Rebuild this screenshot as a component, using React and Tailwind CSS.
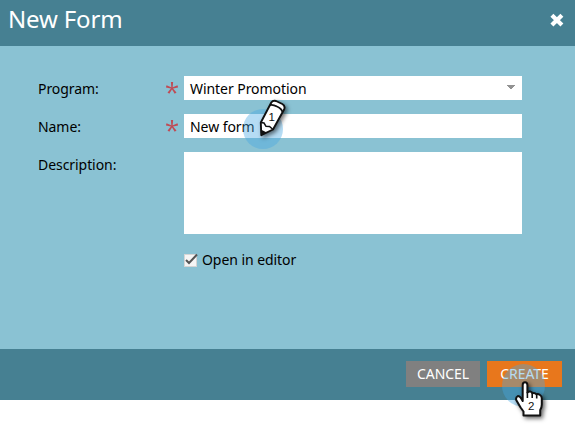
import React from "react";

function Required() {
  return (
    <svg className="mr-[6px] h-[12px] w-[12px] shrink-0" viewBox="0 0 12 12" fill="#c04a54">
      {[0, 72, 144, 216, 288].map((a) => (
        <path key={a} d="M4.900 0.100H7.100L6.600 6.300H5.400Z" transform={`rotate(${a} 6 6.2)`} />
      ))}
    </svg>
  );
}

function Row({ label, required, className = "", children }) {
  return (
    <div className={`flex ${className}`}>
      <div className="flex h-6 w-[146px] items-center justify-between">
        <label className="relative top-px">{label}</label>
        {required && <Required />}
      </div>
      {children}
    </div>
  );
}

function PencilMarker() {
  return (
    <svg className="absolute left-[235px] top-[92px] h-[62px] w-[60px]" viewBox="235 92 60 62">
      <circle cx="263" cy="129" r="20" fill="#45a8e3" fillOpacity="0.4" />
      <g className="drop-shadow-[2px_2px_2px_rgba(0,0,0,0.55)]">
        <path
          d="M271.300 102.500Q273 100 276 101L282.300 104Q285.500 105.800 284.200 109.200L273 129.500L261.300 135.200L260.800 122.500Z"
          fill="#fff"
          stroke="#111"
          strokeWidth="1.9"
          strokeLinejoin="round"
        />
        <path d="M270 105Q273 104.300 277 106.500Q281.500 108.500 282.500 112" fill="none" stroke="#111" strokeWidth="1.8" />
        <path d="M260.800 122.500L264 123L266 126.300L269.500 126.500L273 129.500" fill="none" stroke="#111" strokeWidth="1.5" />
        <path d="M260.800 129.500L266.800 132.500L261 135.700Z" fill="#111" />
      </g>
      <text x="268.400" y="121" fontSize="11.500" fontFamily="Liberation Sans, sans-serif" fill="#111">1</text>
    </svg>
  );
}

function HandMarker() {
  return (
    <svg className="absolute left-[498px] top-[360px] h-[65px] w-[60px]" viewBox="498 360 60 65">
      <circle cx="523.500" cy="385.500" r="21.500" fill="#45a8e3" fillOpacity="0.4" />
      <g className="drop-shadow-[2px_2px_2px_rgba(0,0,0,0.6)]">
        <path
          d="M522.700 401V385Q522.700 382.300 525 382.300T527.400 385V392.500Q528.500 391.400 530.500 391.600Q532 392 532.500 393.300Q534.500 392.300 536.400 394.300Q538 393.700 540 395Q541.800 396.200 541.800 398.500V404.500Q541.800 407.500 540.200 410V415.600H523.500V411.500L520.600 407.500L516.200 400Q515.600 397 517.800 396.100Q520 396 522.700 401Z"
          fill="#fff"
          stroke="#111"
          strokeWidth="2"
          strokeLinejoin="round"
        />
        <path d="M527.400 392V398M532.200 393V398M536.700 394.500V398.500" stroke="#111" strokeWidth="1.6" />
      </g>
      <text x="528" y="410" fontSize="11.500" fontFamily="Liberation Sans, sans-serif" fill="#111">2</text>
    </svg>
  );
}

export default function App() {
  return (
    <div className="relative h-[425px] w-[575px] overflow-hidden bg-white font-['Noto_Sans',sans-serif] text-[14px] leading-5 tracking-[-0.06px] text-black">
      <header className="flex h-[46px] items-start justify-between bg-[#468092] pl-2 pr-[11px] text-white">
        <h1 className="mt-[4px] text-[24px] leading-[30px] tracking-[-0.15px]">New Form</h1>
        <svg className="mt-[13px] h-[14px] w-[14px]" viewBox="0 0 14 14">
          <path d="M1.900 2.200L11.900 12M11.900 2.200L1.900 12" stroke="#fff" strokeWidth="4.200" />
        </svg>
      </header>
      <main className="h-[303px] bg-[#8ac2d3] pl-[38px] pt-[30px]">
        <Row label="Program:" required className="mb-[14px]">
          <div className="flex h-6 w-[338px] items-center justify-between bg-white pl-[6px] pr-[7px]">
            <span className="relative top-px">Winter Promotion</span>
            <svg className="mb-[2px] h-[4px] w-[8px]" viewBox="0 0 8 4" shapeRendering="crispEdges">
              <path d="M0 0H8V1H7V2H6V3H5V4H3V3H2V2H1V1H0Z" fill="#929292" />
            </svg>
          </div>
        </Row>
        <Row label="Name:" required className="mb-[14px]">
          <div className="flex h-6 w-[338px] items-center bg-white pl-[6px]">
            <span className="relative top-px">New form</span>
          </div>
        </Row>
        <Row label="Description:">
          <div className="h-[82px] w-[338px] bg-white" />
        </Row>
        <div className="ml-[146px] mt-4 flex items-center">
          <svg className="mb-px h-[14px] w-[14px]" viewBox="0 0 14 14">
            <rect x="0.500" y="1.500" width="12" height="12" fill="#f5f5f5" stroke="#d5d5d5" />
            <path d="M2 7L5 10L13 1.500" fill="none" stroke="#555" strokeWidth="2" />
          </svg>
          <span className="ml-[4px]">Open in editor</span>
        </div>
      </main>
      <footer className="flex h-[51px] justify-end gap-[7px] bg-[#468092] pr-[13px] pt-3 text-white">
        <button className="h-[26px] w-[74px] bg-[#808080]">CANCEL</button>
        <button className="h-[26px] w-[75px] bg-[#e8771c]">CREATE</button>
      </footer>
      <PencilMarker />
      <HandMarker />
    </div>
  );
}
